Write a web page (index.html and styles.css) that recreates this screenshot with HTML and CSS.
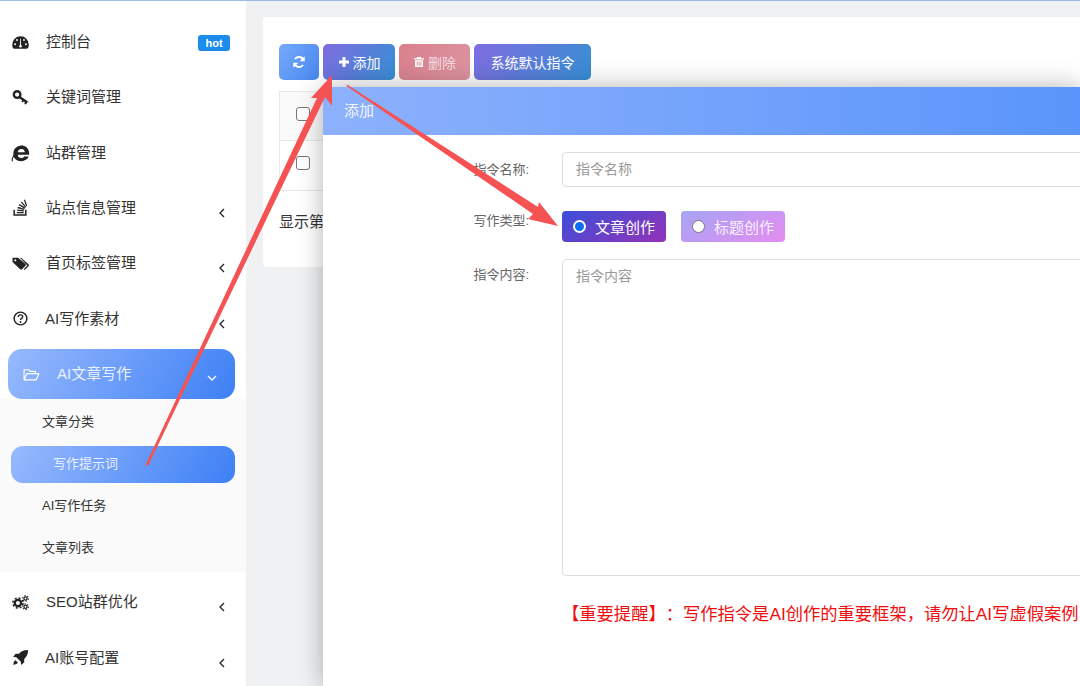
FILE: index.html
```html
<!DOCTYPE html>
<html lang="zh-CN">
<head>
    <meta charset="UTF-8">
    <title>写作提示词</title>
    <link rel="stylesheet" href="styles.css">
</head>
<body>
    <div class="app">
        <ul class="sidebar">
            <li class="nav-item">
                <svg class="nav-icon" viewBox="0 0 16 16"><path d="M8 2.200a7.800 7.800 0 0 0-7.800 7.800c0 1.500.4 2.800 1 3.500.2.200.5.300.8.300h12c.3 0 .6-.1.8-.3.6-.7 1-2 1-3.500A7.800 7.800 0 0 0 8 2.200z"/><g fill="#fff"><circle cx="2.900" cy="9.600" r=".9"/><circle cx="4.700" cy="5.700" r=".9"/><circle cx="11.300" cy="5.700" r=".9"/><circle cx="13.100" cy="9.600" r=".9"/><circle cx="8" cy="11.500" r="1.200"/><path d="M7.500 11 7.700 4.200h.6l.2 6.800z"/></g></svg>
                <span class="nav-text">控制台</span>
                <span class="badge-hot">hot</span>
            </li>
            <li class="nav-item">
                <svg class="nav-icon" viewBox="0 0 16 16"><circle cx="4.800" cy="5.200" r="3.100" fill="none" stroke="#222" stroke-width="2.200"/><path d="M7 7.500 14.500 12.700" fill="none" stroke="#222" stroke-width="2.300"/><path d="M10.500 10.500 9.700 12.400M13 12 12.500 14.300" fill="none" stroke="#222" stroke-width="1.700"/></svg>
                <span class="nav-text">关键词管理</span>
            </li>
            <li class="nav-item">
                <svg class="nav-icon" viewBox="0 0 16 16"><g transform="translate(-2.200 -2.600) scale(1.300)"><path d="M8.600 3C5 3 2.700 5.600 2.700 9s2.300 5.400 5.600 5.400c2.700 0 4.600-1.200 5.500-3.300h-3.300c-.5.800-1.200 1.100-2.100 1.100-1.400 0-2.400-.9-2.500-2.400h8.200c.4-3.900-1.900-6.800-5.500-6.800zM5.900 7.900c.2-1.300 1.200-2.200 2.600-2.200s2.300.9 2.400 2.200z"/><path d="M2 14.600C1.200 12.700 4 6.800 9.500 3.200" fill="none" stroke="#222" stroke-width=".8"/></g></svg>
                <span class="nav-text">站群管理</span>
            </li>
            <li class="nav-item has-sub">
                <svg class="nav-icon" viewBox="0 0 16 16"><path d="M2 10v5h11v-5" fill="none" stroke="#222" stroke-width="1.400"/><path d="M4.500 12.200h6.500v1.200H4.500zM4.800 9.900l6.400.7-.1 1.200-6.400-.7zM5.500 7.400l6.200 1.800-.3 1.200-6.200-1.800zM7 4.800l5.500 3.300-.6 1-5.500-3.300zM9.300 2.500l4.200 4.800-.9.700-4.200-4.800zM12.300.5l2 5.800-1.100.4-2-5.800z"/></svg>
                <span class="nav-text">站点信息管理</span>
                <svg class="chevron" viewBox="0 0 8 12"><path d="M6 2 2 6l4 4" fill="none" stroke="#222" stroke-width="1.300"/></svg>
            </li>
            <li class="nav-item has-sub">
                <svg class="nav-icon" viewBox="0 0 16 16"><path d="M.5 2.500v4l7.200 7c.5.500 1.200.5 1.700 0l3.300-3.300c.5-.5.5-1.200 0-1.700L5.800 2.500z"/><path d="M7.500 2.500h1l7 6.300c.5.500.5 1.200 0 1.700l-3.800 3.500-.8-.6 3.500-3.600z"/><circle cx="3.100" cy="5" r="1" fill="#fff"/></svg>
                <span class="nav-text">首页标签管理</span>
                <svg class="chevron" viewBox="0 0 8 12"><path d="M6 2 2 6l4 4" fill="none" stroke="#222" stroke-width="1.300"/></svg>
            </li>
            <li class="nav-item has-sub ai-row">
                <svg class="nav-icon" viewBox="0 0 16 16"><circle cx="8" cy="8" r="6" fill="none" stroke="#222" stroke-width="1.400"/><path d="M5.900 6.500c0-1.200 1-1.900 2.100-1.900s2.100.7 2.100 1.800c0 1.500-2.100 1.500-2.100 3" fill="none" stroke="#222" stroke-width="1.300"/><circle cx="8" cy="11.300" r=".9"/></svg>
                <span class="nav-text">AI写作素材</span>
                <svg class="chevron" viewBox="0 0 8 12"><path d="M6 2 2 6l4 4" fill="none" stroke="#222" stroke-width="1.300"/></svg>
            </li>
            <li class="nav-item nav-active">
                <svg class="nav-icon" viewBox="0 0 16 16"><path d="M1 13V3.500h4.200L6.700 5h5v2.200M1 13l2.600-5.800H15L12.400 13z" fill="none" stroke="#fff" stroke-width="1.100" stroke-linejoin="round"/></svg>
                <span class="nav-text">AI文章写作</span>
                <svg class="chevron-down" viewBox="0 0 12 8"><path d="M2 2l4 4 4-4" fill="none" stroke="#fff" stroke-width="1.300"/></svg>
            </li>
            <li class="sub-menu">
                <div class="sub-item">文章分类</div>
                <div class="sub-item sub-active">写作提示词</div>
                <div class="sub-item">AI写作任务</div>
                <div class="sub-item">文章列表</div>
            </li>
            <li class="nav-item has-sub">
                <svg class="nav-icon" viewBox="0 0 16 16"><circle cx="5.600" cy="8.500" r="3" fill="none" stroke="#222" stroke-width="2.200"/><circle cx="5.600" cy="8.500" r="4.800" fill="none" stroke="#222" stroke-width="1.400" stroke-dasharray="1.900 1.870"/><circle cx="12.700" cy="4.200" r="1.500" fill="none" stroke="#222" stroke-width="1.200"/><circle cx="12.700" cy="4.200" r="2.700" fill="none" stroke="#222" stroke-width="1" stroke-dasharray="1.200 1.630"/><circle cx="12.700" cy="12" r="1.500" fill="none" stroke="#222" stroke-width="1.200"/><circle cx="12.700" cy="12" r="2.700" fill="none" stroke="#222" stroke-width="1" stroke-dasharray="1.200 1.630"/></svg>
                <span class="nav-text">SEO站群优化</span>
                <svg class="chevron" viewBox="0 0 8 12"><path d="M6 2 2 6l4 4" fill="none" stroke="#222" stroke-width="1.300"/></svg>
            </li>
            <li class="nav-item has-sub ai-row">
                <svg class="nav-icon" viewBox="0 0 16 16"><path d="M15 1c-3.500-.2-6.300 1-8.300 3.500H3.500L1 7.300l3 .4 4.300 4.300.4 3 2.800-2.500V9.300C14 7.300 15.200 4.500 15 1z"/><path d="M3.300 10.500C2 11 1.400 12.700 1.200 14.800c2.100-.2 3.800-.8 4.300-2.100z"/></svg>
                <span class="nav-text">AI账号配置</span>
                <svg class="chevron" viewBox="0 0 8 12"><path d="M6 2 2 6l4 4" fill="none" stroke="#222" stroke-width="1.300"/></svg>
            </li>
        </ul>

        <div class="main">
            <div class="card">
                <div class="toolbar">
                    <button class="btn btn-refresh">
                        <svg class="btn-icon" viewBox="0 0 16 16"><path d="M13.300 6.200A5.600 5.600 0 0 0 3.400 4.600M2.700 9.800a5.600 5.600 0 0 0 9.900 1.600" fill="none" stroke="#fff" stroke-width="2.200"/><path d="M14.500 1.500v5.700H8.800zM1.500 14.500V8.800h5.700z" fill="#fff"/></svg>
                    </button>
                    <button class="btn btn-add">
                        <svg class="btn-icon-sm" viewBox="0 0 12 12"><path d="M4.500 1h3v3.500H11v3H7.500V11h-3V7.500H1v-3h3.500z" fill="#fff"/></svg>
                        添加
                    </button>
                    <button class="btn btn-del">
                        <svg class="btn-icon-sm" viewBox="0 0 12 12"><path d="M4.200 1h3.600l.6 1.300H11v1.200H1V2.300h2.600zM2 4.300h8V11H2zm1.700 1.200v4.300h.9V5.500zm1.900 0v4.300h.9V5.500zm1.900 0v4.300h.9V5.500z" fill="#fff" fill-rule="evenodd"/></svg>
                        删除
                    </button>
                    <button class="btn btn-system">系统默认指令</button>
                </div>
                <div class="table">
                    <div class="table-row table-head"><input type="checkbox" class="check"></div>
                    <div class="table-row"><input type="checkbox" class="check"></div>
                </div>
                <div class="table-info">显示第 1 到第 1 条记录</div>
            </div>
        </div>
    </div>

    <div class="modal">
        <div class="modal-title">添加</div>
        <div class="modal-body">
            <div class="form-row">
                <label class="form-label">指令名称:</label>
                <div class="form-input">指令名称</div>
            </div>
            <div class="form-row form-row-type">
                <label class="form-label">写作类型:</label>
                <div class="radio-group">
                    <span class="radio-btn radio-on"><i class="radio-dot"></i>文章创作</span>
                    <span class="radio-btn radio-off"><i class="radio-dot"></i>标题创作</span>
                </div>
            </div>
            <div class="form-row form-row-content">
                <label class="form-label">指令内容:</label>
                <div class="form-textarea">指令内容</div>
            </div>
            <p class="notice">【重要提醒】：写作指令是AI创作的重要框架，请勿让AI写虚假案例</p>
        </div>
    </div>

    <!-- annotation arrows -->
    <svg class="arrows" viewBox="0 0 1080 686">
        <path d="M145.500 465 317 98 311 98 332 75 332 106 325 97 148 466z"/>
        <path d="M347 84.500 538 207 539 202 558 226 528 219 533 214 346.500 86z"/>
    </svg>
</body>
</html>
```

FILE: styles.css
```css
* {
    box-sizing: border-box;
}
html, body {
    margin: 0;
    padding: 0;
    height: 100%;
    overflow: hidden;
}
body {
    font-family: "Liberation Sans", "Noto Sans CJK SC", sans-serif;
    color: #333;
    background: #f0f1f2;
    border-top: 1px solid #9db9ee;
}
.app {
    display: flex;
    height: 685px;
}

/* sidebar */
.sidebar {
    width: 246px;
    flex-shrink: 0;
    margin: 0;
    padding: 13.4px 0 0;
    list-style: none;
    background: #fff;
}
.nav-item {
    display: flex;
    align-items: center;
    height: 55.3px;
    padding: 0 20px 0 12px;
    font-size: 15px;
    color: #333;
}
.nav-icon {
    width: 17px;
    height: 17px;
    fill: #222;
    flex-shrink: 0;
    overflow: visible;
}
.nav-text {
    margin: 0 0 3px 17px;
    flex: 1;
}
.ai-row .nav-text {
    margin-left: 16px;
}
.badge-hot {
    margin: 2px -4px 0 0;
    background: #1c8cec;
    color: #fff;
    font-size: 11px;
    font-weight: bold;
    line-height: 16px;
    width: 32px;
    text-align: center;
    border-radius: 3px;
}
.chevron {
    width: 8px;
    height: 12px;
    margin-top: 10px;
}
.nav-active {
    height: 50px;
    margin: 3px 11px 0 8px;
    padding: 0 17px 0 15px;
    border-radius: 14px;
    background: linear-gradient(120deg, #98b9fd, #3d80f5);
    color: #e9f0ff;
}
.nav-active .nav-text {
    margin-left: 17px;
}
.chevron-down {
    width: 12px;
    height: 8px;
    margin-top: 8px;
}
.sub-menu {
    height: 173px;
    margin-bottom: 2.5px;
    padding-top: 2px;
    background: #fafafa;
}
.sub-item {
    display: flex;
    align-items: center;
    height: 42px;
    padding: 0 0 3px 42px;
    font-size: 13px;
    color: #333;
}
.sub-active {
    height: 37px;
    margin: 2.5px 11px;
    padding-left: 42px;
    border-radius: 12px;
    background: linear-gradient(120deg, #98b9fd, #3d80f5);
    color: #e9f0ff;
}

/* main area */
.main {
    flex: 1;
    min-width: 0;
    padding: 16px 0 0 17px;
}
.card {
    height: 250px;
    padding: 27px 0 0 16px;
    background: #fff;
    border-radius: 4px 0 0 4px;
}
.toolbar {
    display: flex;
    gap: 4px;
}
.btn {
    display: flex;
    align-items: center;
    justify-content: center;
    height: 36px;
    padding: 0;
    border: none;
    border-radius: 5px;
    color: #fff;
    font-family: inherit;
    font-size: 14px;
}
.btn-refresh {
    width: 40px;
    background: linear-gradient(120deg, #76a9fb, #4788ee);
}
.btn-add {
    width: 72px;
    background: linear-gradient(120deg, #7f6cdf, #368fd4);
}
.btn-del {
    width: 71px;
    background: linear-gradient(120deg, #d9808c, #dc94a0);
    color: #f4dde1;
}
.btn-system {
    width: 117px;
    background: linear-gradient(120deg, #7f6cdf, #368fd4);
}
.btn-icon {
    width: 14px;
    height: 14px;
}
.btn-icon-sm {
    width: 12px;
    height: 12px;
    margin-right: 3px;
}
.table {
    margin-top: 11px;
    border-top: 1px solid #e8e8e8;
    border-left: 1px solid #e8e8e8;
}
.table-row {
    display: flex;
    align-items: center;
    height: 50px;
    padding: 0 0 5px 16px;
    border-bottom: 1px solid #e8e8e8;
}
.table-head {
    height: 49px;
    padding-bottom: 5px;
    background: #fafafa;
}
.check {
    width: 14px;
    height: 14px;
    margin: 0;
    appearance: none;
    border: 1px solid #767676;
    border-radius: 3px;
    background: #fff;
}
.table-info {
    margin-top: 21px;
    font-size: 15px;
    line-height: 20px;
    color: #333;
}

/* modal over the table */
.modal {
    position: absolute;
    left: 323px;
    top: 87px;
    right: 0;
    bottom: 0;
    overflow: hidden;
    background: #fff;
    box-shadow: 0 0 24px rgba(0, 0, 0, 0.3);
}
.modal-title {
    height: 48px;
    padding-left: 21px;
    line-height: 48px;
    font-size: 15px;
    color: #f2f6ff;
    background: linear-gradient(90deg, #8db1fc, #5a95fb);
}
.modal-body {
    padding-top: 17px;
}
.form-row {
    display: flex;
}
.form-label {
    width: 206px;
    flex-shrink: 0;
    padding-top: 7px;
    margin-right: 33px;
    font-size: 13px;
    text-align: right;
    color: #666;
}
.form-input {
    width: 700px;
    flex-shrink: 0;
    height: 35px;
    padding-left: 13px;
    line-height: 33px;
    font-size: 14px;
    color: #999;
    border: 1px solid #ddd;
    border-radius: 4px;
}
.form-row-type {
    margin-top: 24px;
}
.form-row-type .form-label {
    padding-top: 0;
    margin-top: -1px;
}
.radio-group {
    display: flex;
    gap: 15px;
}
.radio-btn {
    display: flex;
    align-items: center;
    width: 104px;
    height: 31px;
    padding-left: 11px;
    border-radius: 4px;
    font-size: 15px;
    color: #fff;
}
.radio-on {
    background: linear-gradient(150deg, #3b4fd8, #9333b8);
}
.radio-off {
    background: linear-gradient(150deg, #a5a5f5, #e48cf0);
    color: #f9f0ff;
}
.radio-dot {
    width: 13px;
    height: 13px;
    margin-right: 9px;
    border-radius: 50%;
    border: 1px solid #777;
    background: #fff;
}
.radio-on .radio-dot {
    border: 2px solid #fff;
    background: #0a6cff;
}
.form-row-content {
    margin-top: 17px;
}
.form-row-content .form-label {
    padding-top: 5px;
}
.form-textarea {
    width: 700px;
    flex-shrink: 0;
    height: 317px;
    padding: 5px 13px;
    font-size: 14px;
    color: #999;
    border: 1px solid #ddd;
    border-radius: 4px;
}
.notice {
    margin: 27px 0 0 239px;
    font-size: 17.3px;
    line-height: 22px;
    color: #f00e0e;
    white-space: nowrap;
    text-spacing-trim: space-all;
}

.arrows {
    position: absolute;
    left: 0;
    top: 0;
    width: 1080px;
    height: 686px;
    fill: #f55353;
    pointer-events: none;
}
```
